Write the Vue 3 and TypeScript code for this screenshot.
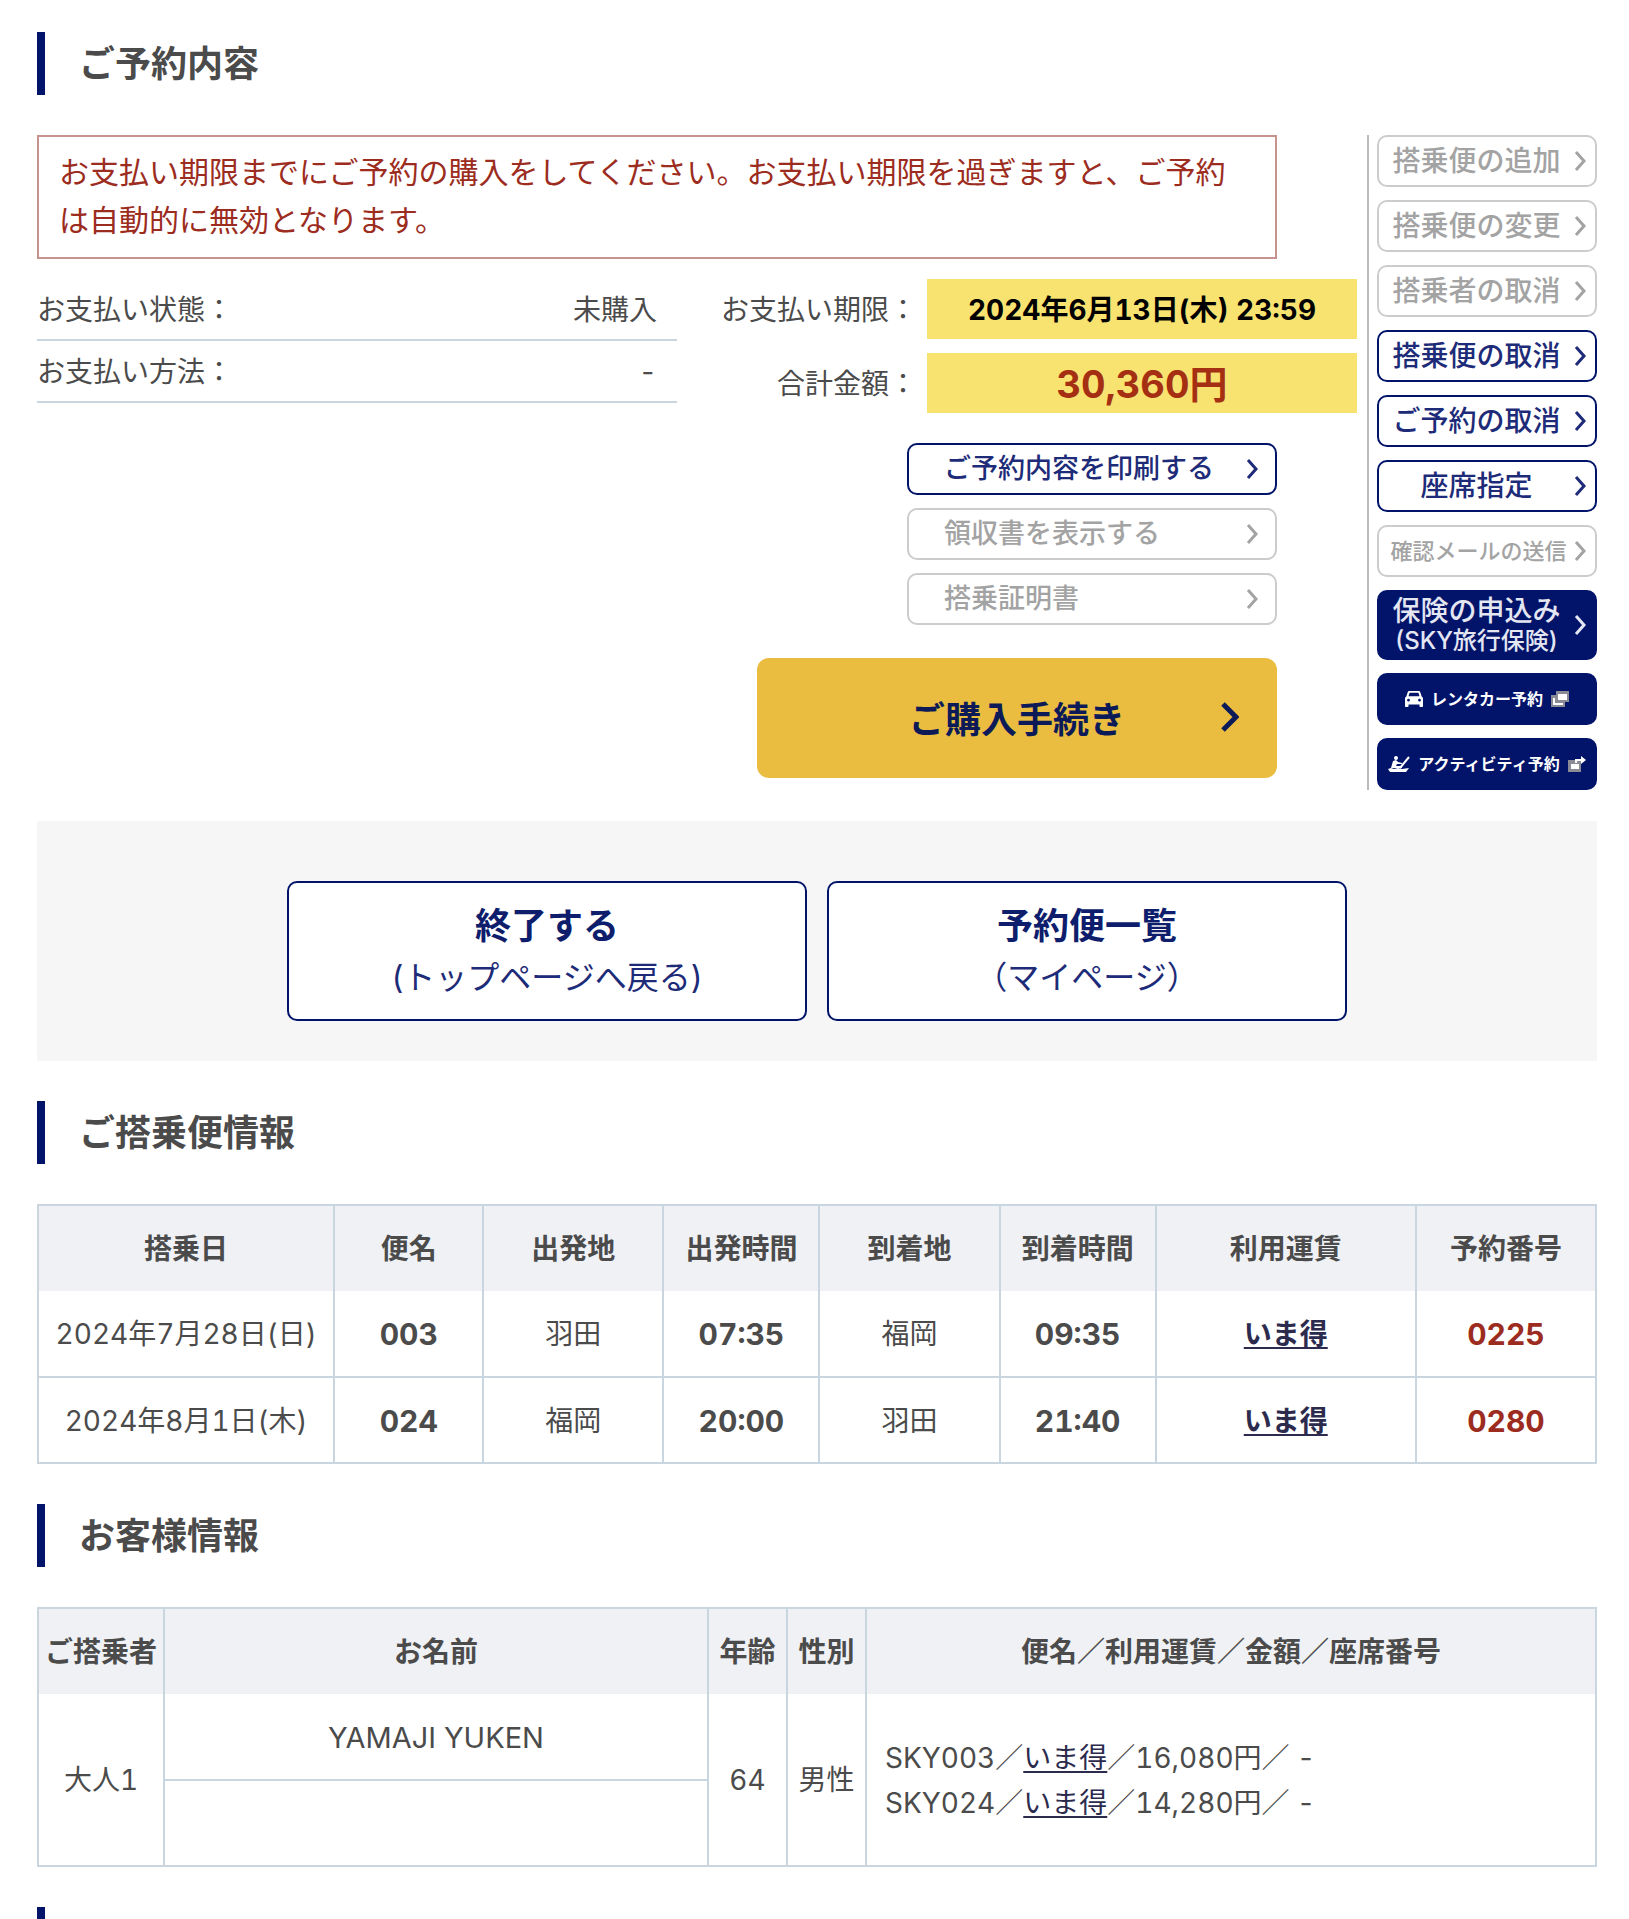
<script setup lang="ts">
interface SideAction {
  label: string
  kind: 'off' | 'on'
  small?: boolean
}

interface Flight {
  date: string
  no: string
  from: string
  dep: string
  to: string
  arr: string
  fare: string
  code: string
}

const sideActions: SideAction[] = [
  { label: '搭乗便の追加', kind: 'off' },
  { label: '搭乗便の変更', kind: 'off' },
  { label: '搭乗者の取消', kind: 'off' },
  { label: '搭乗便の取消', kind: 'on' },
  { label: 'ご予約の取消', kind: 'on' },
  { label: '座席指定', kind: 'on' },
  { label: '確認メールの送信', kind: 'off', small: true },
]

const documents: SideAction[] = [
  { label: 'ご予約内容を印刷する', kind: 'on' },
  { label: '領収書を表示する', kind: 'off' },
  { label: '搭乗証明書', kind: 'off' },
]

const flightColumns = ['搭乗日', '便名', '出発地', '出発時間', '到着地', '到着時間', '利用運賃', '予約番号']

const flights: Flight[] = [
  { date: '2024年7月28日(日)', no: '003', from: '羽田', dep: '07:35', to: '福岡', arr: '09:35', fare: 'いま得', code: '0225' },
  { date: '2024年8月1日(木)', no: '024', from: '福岡', dep: '20:00', to: '羽田', arr: '21:40', fare: 'いま得', code: '0280' },
]

const fares = [
  { flight: 'SKY003', fare: 'いま得', price: '16,080円', seat: '-' },
  { flight: 'SKY024', fare: 'いま得', price: '14,280円', seat: '-' },
]
</script>

<template>
  <main class="page">
    <h2 class="heading">ご予約内容</h2>

    <section class="booking">
      <div class="summary">
        <p class="alert">お支払い期限までにご予約の購入をしてください。お支払い期限を過ぎますと、ご予約は自動的に無効となります。</p>

        <div class="payment">
          <dl class="status">
            <div class="status-row"><dt>お支払い状態：</dt><dd>未購入</dd></div>
            <div class="status-row"><dt>お支払い方法：</dt><dd>-</dd></div>
          </dl>
          <dl class="totals">
            <div class="total-row"><dt>お支払い期限：</dt><dd class="due">2024年6月13日(木) 23:59</dd></div>
            <div class="total-row"><dt>合計金額：</dt><dd class="amount">30,360円</dd></div>
          </dl>
        </div>

        <div class="documents">
          <button v-for="d in documents" :key="d.label" type="button" class="btn doc" :class="d.kind" :disabled="d.kind === 'off'">
            <span>{{ d.label }}</span>
            <svg class="chevron" viewBox="0 0 12 20" aria-hidden="true"><path d="M2 1l8 9-8 9" /></svg>
          </button>
        </div>

        <button type="button" class="purchase">
          <span>ご購入手続き</span>
          <svg class="chevron" viewBox="0 0 18 30" aria-hidden="true"><path d="M2 2l13 13L2 28" /></svg>
        </button>
      </div>

      <aside class="side">
        <button v-for="a in sideActions" :key="a.label" type="button" class="btn" :class="[a.kind, { small: a.small }]" :disabled="a.kind === 'off'">
          <span class="label">{{ a.label }}</span>
          <svg class="chevron" viewBox="0 0 12 20" aria-hidden="true"><path d="M2 1l8 9-8 9" /></svg>
        </button>
        <button type="button" class="btn solid insurance">
          <span class="label">保険の申込み<small>(SKY旅行保険)</small></span>
          <svg class="chevron" viewBox="0 0 12 20" aria-hidden="true"><path d="M2 1l8 9-8 9" /></svg>
        </button>
        <a href="#" class="btn solid partner">
          <svg width="18" height="16" viewBox="0 0 18 16" aria-hidden="true">
            <path fill="#fff" fill-rule="evenodd" d="M4.5 0h9c.9 0 1.500 .5 1.800 1.300L16.700 5.500C17.600 6 18 6.700 18 7.600V15c0 .6-.4 1-1 1h-1.500c-.6 0-1-.4-1-1v-1.500h-11V15c0 .6-.4 1-1 1H1c-.6 0-1-.4-1-1V7.600C0 6.700 .4 6 1.300 5.500L2.700 1.300C3 .5 3.600 0 4.500 0zM4.600 1.800L3.500 5.200h11l-1.100-3.400zM3.500 7.800a1.400 1.400 0 1 0 0 2.800 1.400 1.400 0 0 0 0-2.800zm11 0a1.400 1.400 0 1 0 0 2.800 1.400 1.400 0 0 0 0-2.800z" />
          </svg>
          <span>レンタカー予約</span>
          <svg width="18" height="16" viewBox="0 0 18 16" aria-hidden="true">
            <path fill="#8b8b96" d="M5 0h13v11h-4v5H0V4h5z" />
            <path fill="#fff" d="M7 3h9v6H7z" />
            <path fill="none" stroke="#fff" stroke-width="2" d="M3 7v6h9" />
          </svg>
        </a>
        <a href="#" class="btn solid partner">
          <svg width="22" height="16" viewBox="0 0 22 16" aria-hidden="true">
            <circle cx="8" cy="2" r="2" fill="#fff" />
            <path fill="#fff" d="M5 5l3-1 2 2 4 1v1l-5 0-1 2h5l1 2H3zM0 13l3-1 3 1 4-1 4 1 7-1-3 4H2z" />
            <path fill="none" stroke="#fff" stroke-width="2" d="M21 1L12 12" />
          </svg>
          <span>アクティビティ予約</span>
          <svg width="18" height="16" viewBox="0 0 18 16" aria-hidden="true">
            <path fill="#8b8b96" d="M0 4h13v12H0z" />
            <path fill="#fff" d="M3 8h8v5H3zM7 3h6V0l5 4-5 4V5H9v2H7z" />
          </svg>
        </a>
      </aside>
    </section>

    <nav class="exits" aria-label="ページ移動">
      <button type="button" class="exit"><strong>終了する</strong><span>(トップページへ戻る)</span></button>
      <button type="button" class="exit"><strong>予約便一覧</strong><span>（マイページ）</span></button>
    </nav>

    <h2 class="heading">ご搭乗便情報</h2>
    <table class="grid">
      <colgroup>
        <col class="w-date" /><col class="w-no" /><col class="w-place" /><col class="w-time" />
        <col class="w-place" /><col class="w-time" /><col class="w-fare" /><col class="w-place" />
      </colgroup>
      <thead>
        <tr><th v-for="c in flightColumns" :key="c" scope="col">{{ c }}</th></tr>
      </thead>
      <tbody>
        <tr v-for="f in flights" :key="f.no">
          <td>{{ f.date }}</td>
          <td class="strong">{{ f.no }}</td>
          <td>{{ f.from }}</td>
          <td class="strong">{{ f.dep }}</td>
          <td>{{ f.to }}</td>
          <td class="strong">{{ f.arr }}</td>
          <td><a href="#" class="fare bold">{{ f.fare }}</a></td>
          <td class="strong code">{{ f.code }}</td>
        </tr>
      </tbody>
    </table>

    <h2 class="heading">お客様情報</h2>
    <table class="grid">
      <colgroup>
        <col class="w-type" /><col class="w-name" /><col class="w-attr" /><col class="w-attr" /><col class="w-detail" />
      </colgroup>
      <thead>
        <tr>
          <th scope="col">ご搭乗者</th>
          <th scope="col">お名前</th>
          <th scope="col">年齢</th>
          <th scope="col">性別</th>
          <th scope="col">便名／利用運賃／金額／座席番号</th>
        </tr>
      </thead>
      <tbody>
        <tr>
          <td rowspan="2">大人1</td>
          <td class="latin">YAMAJI YUKEN</td>
          <td rowspan="2">64</td>
          <td rowspan="2">男性</td>
          <td rowspan="2" class="detail">
            <div v-for="f in fares" :key="f.flight">{{ f.flight }}／<a href="#" class="fare">{{ f.fare }}</a>／{{ f.price }}／ {{ f.seat }}</div>
          </td>
        </tr>
        <tr><td></td></tr>
      </tbody>
    </table>

    <div class="heading" aria-hidden="true"></div>
  </main>
</template>

<style>
body {
  margin: 0;
  background: #fff;
}
</style>

<style scoped>
.page {
  --navy: #02146a;
  --line: #c9d6e0;
  --red: #9c2c20;
  box-sizing: border-box;
  height: 100vh;
  overflow: hidden;
  padding: 32px 32px 0 37px;
  color: #4b4b4b;
  font-family: Inter, 'Noto Sans CJK JP', sans-serif;
  font-size: 28px;
  line-height: 45px;
  font-variant-numeric: tabular-nums;
}

.page *,
.page *::before {
  box-sizing: border-box;
}

.heading {
  height: 63px;
  margin: 40px 0;
  padding-left: 34px;
  border-left: 8px solid var(--navy);
  font-size: 36px;
  font-weight: 700;
  line-height: 65px;
}

.heading:first-child {
  margin-top: 0;
}

.booking {
  display: flex;
}

.summary {
  flex: 1;
  display: flex;
  flex-direction: column;
  padding-right: 10px;
}

.alert {
  margin: 0 80px 20px 0;
  padding: 11px 20px 13px;
  border: 2px solid #c7938f;
  color: var(--red);
  font-size: 30px;
  line-height: 48px;
}

.payment {
  display: flex;
  gap: 44px;
}

.status,
.totals {
  margin: 0;
}

.status {
  flex: 1;
}

.status-row {
  display: flex;
  justify-content: space-between;
  height: 62px;
  padding-right: 20px;
  border-bottom: 2px solid var(--line);
  line-height: 62px;
}

.totals {
  display: flex;
  flex-direction: column;
  gap: 14px;
}

.total-row {
  display: flex;
  justify-content: flex-end;
  gap: 10px;
  height: 60px;
  line-height: 62px;
}

dd {
  margin: 0;
}

.due,
.amount {
  width: 430px;
  background: #f8e371;
  font-weight: 700;
  text-align: center;
}

.due {
  color: #000;
}

.amount {
  color: #a52f12;
  font-size: 38px;
}

.documents {
  display: flex;
  flex-direction: column;
  align-self: flex-end;
  gap: 13px;
  width: 370px;
  margin: 30px 80px 33px 0;
}

.btn {
  display: flex;
  align-items: center;
  height: 52px;
  margin: 0;
  padding: 0 9px 0 0;
  border: 2px solid currentColor;
  border-radius: 10px;
  background: #fff;
  font-family: inherit;
  font-size: 28px;
  font-weight: 500;
  line-height: 32px;
  text-decoration: none;
}

.on {
  border-color: var(--navy);
  color: #1d2b78;
}

.off {
  border-color: #ccc;
  color: #a3a3a3;
}

.chevron {
  flex: none;
  width: 12px;
  height: 20px;
  fill: none;
  stroke: currentColor;
  stroke-width: 3px;
}

.btn.doc {
  justify-content: space-between;
  padding: 0 17px 0 35px;
  font-size: 27px;
}

.purchase {
  display: grid;
  grid-template-columns: 1fr auto 1fr;
  align-items: center;
  align-self: flex-end;
  width: 520px;
  height: 120px;
  margin-right: 80px;
  padding: 0 38px 3px;
  border: 0;
  border-radius: 12px;
  background: #eabc40;
  color: #0c1a57;
  font-family: inherit;
  font-size: 36px;
  font-weight: 700;
}

.purchase span {
  grid-column: 2;
}

.purchase .chevron {
  justify-self: end;
  width: 18px;
  height: 30px;
  stroke-width: 5px;
}

.side {
  display: flex;
  flex-direction: column;
  gap: 13px;
  width: 230px;
  padding-left: 8px;
  border-left: 2px solid #bbb;
}

.label {
  flex: 1;
  text-align: center;
  white-space: nowrap;
}

.btn.small {
  padding-left: 4px;
  font-size: 22px;
}

.solid {
  border-color: var(--navy);
  background: var(--navy);
  color: #e4e6f2;
}

.insurance {
  height: 70px;
}

.insurance small {
  display: block;
  font-size: 24px;
  line-height: 28px;
}

.btn.partner {
  justify-content: center;
  gap: 8px;
  padding: 0;
  color: #fff;
  font-size: 16px;
  font-weight: 700;
}

.exits {
  display: flex;
  justify-content: center;
  gap: 20px;
  margin-top: 31px;
  padding: 60px 0 40px;
  background: #f6f6f6;
}

.exit {
  display: flex;
  flex-direction: column;
  align-items: center;
  justify-content: center;
  width: 520px;
  height: 140px;
  padding: 2px 0 0;
  border: 2px solid var(--navy);
  border-radius: 10px;
  background: #fff;
  color: #1d2b78;
  font-family: inherit;
  font-size: 32px;
  line-height: 52px;
}

.exit strong {
  color: #0e1d6c;
  font-size: 36px;
}

.grid {
  width: 100%;
  border-collapse: collapse;
  table-layout: fixed;
  text-align: center;
}

.grid th,
.grid td {
  height: 86px;
  padding: 2px 0 0;
  border: 2px solid var(--line);
}

.grid th {
  border-bottom: 0;
  background: #eff1f5;
  white-space: nowrap;
}

.grid tbody tr:first-child td {
  border-top: 0;
}

.grid .strong {
  font-size: 30px;
  font-weight: 700;
}

.grid .latin {
  font-size: 29px;
}

.grid .code {
  color: var(--red);
}

.grid .detail {
  padding-left: 18px;
  text-align: left;
}

.fare {
  color: #2c2b4e;
  text-decoration: underline;
  text-decoration-thickness: 2px;
  text-underline-offset: 3px;
}

.bold {
  font-weight: 700;
}

.w-date { width: 296px; }
.w-no { width: 149px; }
.w-place { width: 180px; }
.w-time { width: 156px; }
.w-fare { width: 260px; }
.w-type { width: 126px; }
.w-name { width: 544px; }
.w-attr { width: 79px; }
.w-detail { width: 730px; }
</style>
